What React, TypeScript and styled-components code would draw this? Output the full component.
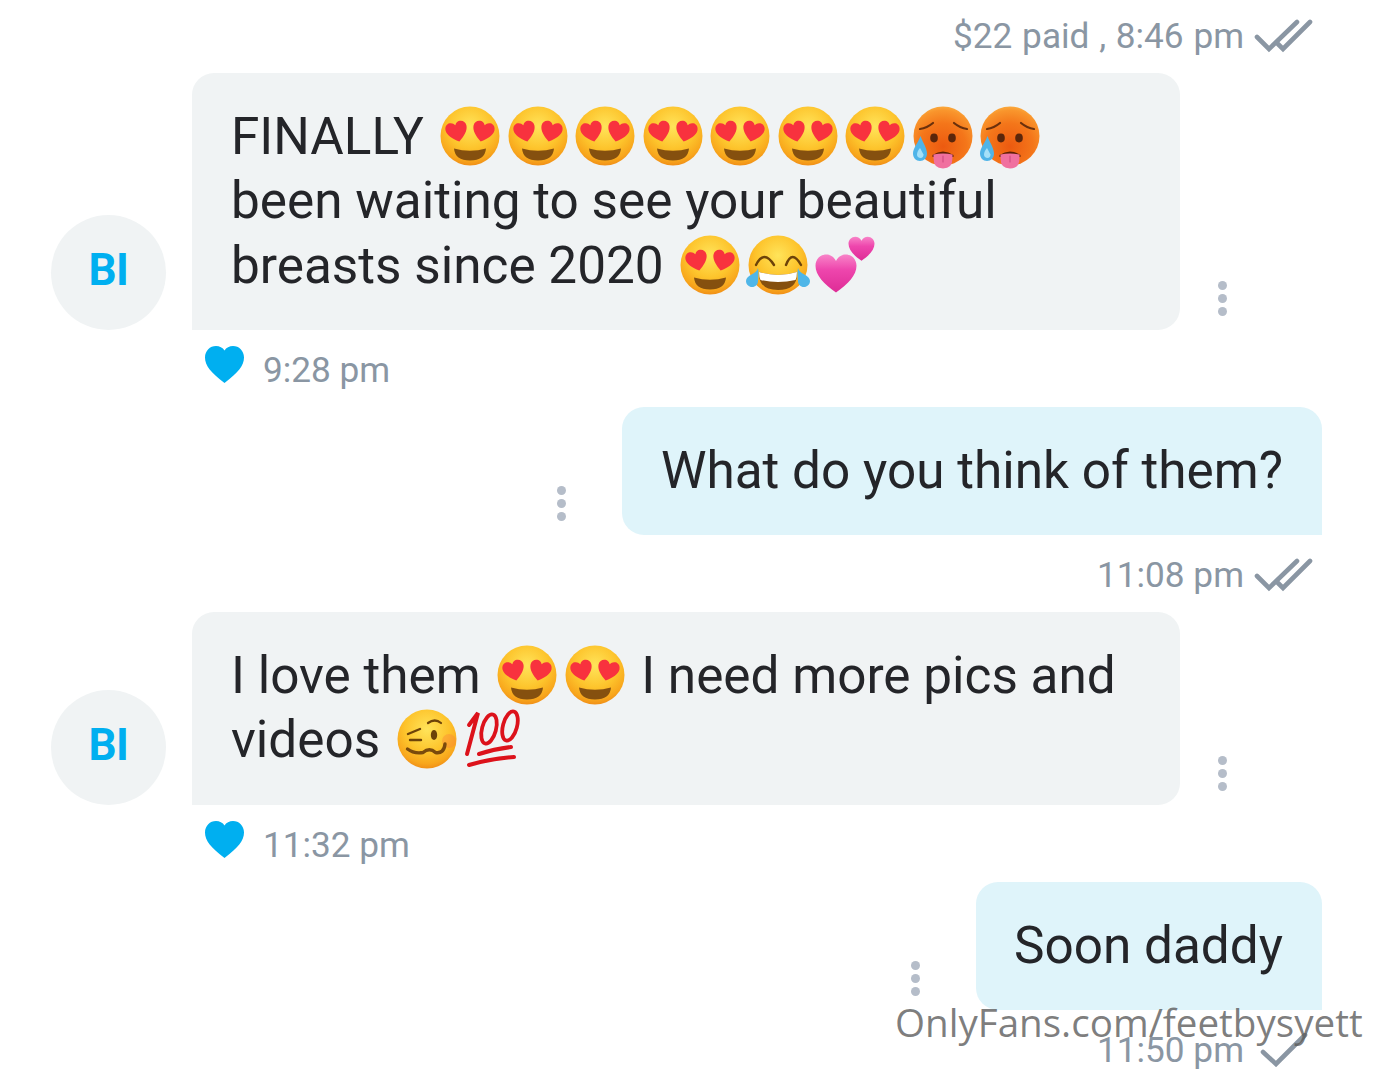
import React from 'react';
import styled, {createGlobalStyle} from 'styled-components';

const GlobalStyle = createGlobalStyle`
  html, body {
    margin: 0;
    padding: 0;
    background: #fff;
  }
`

const Heart = ({x, y, size, rotate, fill}: { x: number, y: number, size: number, rotate: number, fill: string }) => (
    <g transform={`translate(${x} ${y}) rotate(${rotate}) scale(${size / 20}) translate(-10 -10)`}>
        <path
            d="M10 19C4 15 0 10.5 0 6C0 2.7 2.4 .5 5.2 .5C7.2 .5 9 1.6 10 3.6C11 1.6 12.8 .5 14.8 .5C17.6 .5 20 2.7 20 6C20 10.5 16 15 10 19z"
            fill={fill}/>
    </g>
)

const YellowFace = ({id}: { id: string }) => (
    <>
        <defs>
            <radialGradient id={id} cx="50%" cy="34%" r="68%">
                <stop offset="0%" stopColor="#ffe45a"/>
                <stop offset="55%" stopColor="#fdc42c"/>
                <stop offset="85%" stopColor="#f8a61c"/>
                <stop offset="100%" stopColor="#ef8a16"/>
            </radialGradient>
        </defs>
        <circle cx="30" cy="30" r="29.5" fill={`url(#${id})`}/>
    </>
)

const HeartEyes = () => (
    <EmojiSvg viewBox="0 0 60 60" role="img" aria-label="heart eyes">
        <YellowFace id="face-hearts"/>
        <path d="M14 42.500Q30 47 46 42.500Q45 54.500 30 54.500Q15 54.500 14 42.500z" fill="#85500f"/>
        <Heart x={17} y={26} size={21.500} rotate={-14} fill="#f8323e"/>
        <Heart x={43} y={26} size={21.500} rotate={14} fill="#f8323e"/>
    </EmojiSvg>
)

const HotFace = () => (
    <EmojiSvg viewBox="0 0 60 60" role="img" aria-label="hot face">
        <defs>
            <radialGradient id="face-hot" cx="50%" cy="68%" r="72%">
                <stop offset="0%" stopColor="#ec5a10"/>
                <stop offset="55%" stopColor="#f4761a"/>
                <stop offset="85%" stopColor="#f9952c"/>
                <stop offset="100%" stopColor="#fcb446"/>
            </radialGradient>
        </defs>
        <circle cx="30" cy="30" r="29.5" fill="url(#face-hot)"/>
        <path d="M7 23Q14 22 20 17" stroke="#6a300c" strokeWidth="2.200" fill="none" strokeLinecap="round"/>
        <path d="M41 17Q47 22 54 23" stroke="#6a300c" strokeWidth="2.200" fill="none" strokeLinecap="round"/>
        <ellipse cx="21" cy="32" rx="3.800" ry="4.400" fill="#5a260b"/>
        <ellipse cx="39" cy="32" rx="3.800" ry="4.400" fill="#5a260b"/>
        <path d="M19.500 49Q30 42 40.500 49L40.500 51L19.500 51z" fill="#5f2007"/>
        <path d="M20.500 48.500Q30 46.500 39.500 48.500L39.500 52Q39.500 62.500 30 62.500Q20.500 62.500 20.500 52z" fill="#f0709f"/>
        <path d="M30 50L30 56" stroke="#d34d83" strokeWidth="1.200" strokeLinecap="round"/>
        <path d="M7.500 30C5 37 0 42 0 47.500C0 52 3 55 7 55C11 55 14 52 14 47.500C14 42 10 37 7.500 30z" fill="#4fb4e8"/>
        <path d="M7 42C5.500 44 4 46 4 48.500C4 50.500 5.500 52 7.500 52C9.500 52 10.500 50.500 10.500 48.500" fill="#a4e0f8"/>
    </EmojiSvg>
)

const Joy = () => (
    <EmojiSvg viewBox="0 0 60 60" role="img" aria-label="tears of joy">
        <YellowFace id="face-joy"/>
        <path d="M8 30Q16 14 26 30M38 30Q44 14 53 30" stroke="#6d4309" strokeWidth="2.400" fill="none"
              strokeLinecap="round"/>
        <path d="M11 37Q30 43 49 37Q50 55 30 55Q10 55 11 37z" fill="#85500f"/>
        <path d="M11 37Q30 43 49 37Q49 42 47.500 45Q30 49 12.500 45Q11 42 11 37z" fill="#fff"/>
        <path d="M10 33C9 39 -2 40 -2 46C-2 49.500 1 52 4 52C7.500 52 10 49.500 10 46C10 42 11 38 10 33z" fill="#4fb6e8"/>
        <path d="M50 33C51 39 62 40 62 46C62 49.500 59 52 56 52C52.500 52 50 49.500 50 46C50 42 49 38 50 33z"
              fill="#4fb6e8"/>
    </EmojiSvg>
)

const TwoHearts = () => (
    <EmojiSvg viewBox="0 0 60 60" role="img" aria-label="two hearts">
        <defs>
            <linearGradient id="heart-pink" x1="0" y1="0" x2="0" y2="1">
                <stop offset="0%" stopColor="#f884c8"/>
                <stop offset="40%" stopColor="#ee46ad"/>
                <stop offset="100%" stopColor="#de2c96"/>
            </linearGradient>
        </defs>
        <Heart x={21} y={39} size={41} rotate={0} fill="url(#heart-pink)"/>
        <Heart x={46.500} y={14} size={26} rotate={0} fill="url(#heart-pink)"/>
    </EmojiSvg>
)

const Woozy = () => (
    <EmojiSvg viewBox="0 0 60 60" role="img" aria-label="woozy face">
        <YellowFace id="face-woozy"/>
        <circle cx="52" cy="32" r="7" fill="#f97a3c" opacity=".35"/>
        <path d="M11 25L23 20M13 31L24 31" stroke="#6d4309" strokeWidth="2.400" fill="none" strokeLinecap="round"/>
        <path d="M31 14Q38 9 44 14" stroke="#6d4309" strokeWidth="2.200" fill="none" strokeLinecap="round"/>
        <ellipse cx="37" cy="26" rx="3.200" ry="5" fill="#6d4309"/>
        <path d="M10.500 40Q17 45 26 43.500Q32.500 38 38.500 43.500Q47 45 48 35" stroke="#7a4a0c" strokeWidth="3.400"
              fill="none" strokeLinecap="round"/>
    </EmojiSvg>
)

const Hundred = () => (
    <EmojiSvg viewBox="0 0 60 60" role="img" aria-label="hundred points">
        <g stroke="#dc121b" fill="none" strokeLinecap="round">
            <path d="M5 16L14 4L3 45" strokeWidth="4"/>
            <ellipse cx="25" cy="20" rx="7" ry="15" transform="rotate(15 25 20)" strokeWidth="3.800"/>
            <ellipse cx="46" cy="17" rx="7" ry="15" transform="rotate(15 46 17)" strokeWidth="3.800"/>
            <path d="M15 45Q30 40 47 38" strokeWidth="4"/>
            <path d="M5 56Q25 50 50 48" strokeWidth="4"/>
        </g>
    </EmojiSvg>
)

const ReadIcon = () => (
    <CheckSvg viewBox="0 0 60 34">
        <path d="M3 18L15 30L43 3M24 25L29 30L56 3" fill="none" stroke="#8a96a3" strokeWidth="4.600"
              strokeLinecap="round" strokeLinejoin="miter"/>
    </CheckSvg>
)

const SentIcon = () => (
    <CheckSvg viewBox="0 0 60 34">
        <path d="M9 19L22 31L51 2" fill="none" stroke="#8a96a3" strokeWidth="4.600" strokeLinecap="round"
              strokeLinejoin="miter"/>
    </CheckSvg>
)

const Kebab = ({own}: { own?: boolean }) => (
    <KebabBox $own={own}>
        <i/><i/><i/>
    </KebabBox>
)

const Incoming = ({children, time}: { children: React.ReactNode, time: string }) => (
    <>
        <Row>
            <Avatar>BI</Avatar>
            <Bubble>{children}</Bubble>
            <Kebab/>
        </Row>
        <LikedMeta>
            <HeartSvg viewBox="0 0 39 37">
                <path
                    d="M19.500 37C6 26.500 0 20 0 11.500C0 4.800 5 0 11 0C14.500 0 17.800 1.700 19.500 4.500C21.200 1.700 24.500 0 28 0C34 0 39 4.800 39 11.500C39 20 33 26.500 19.500 37z"
                    fill="#00aff0"/>
            </HeartSvg>
            <Time>{time}</Time>
        </LikedMeta>
    </>
)

const Outgoing = ({children}: { children: React.ReactNode }) => (
    <OwnRow>
        <Kebab own/>
        <OwnBubble>{children}</OwnBubble>
    </OwnRow>
)

const App = () => {
    return (
        <Page>
            <GlobalStyle/>
            <OwnMeta $first>
                <Time $wide>$22 paid , 8:46 pm</Time>
                <ReadIcon/>
            </OwnMeta>
            <Incoming time="9:28 pm">
                FINALLY <HeartEyes/><HeartEyes/><HeartEyes/><HeartEyes/><HeartEyes/><HeartEyes/><HeartEyes/><HotFace/><HotFace/>
                <br/>
                been waiting to see your beautiful
                <br/>
                breasts since 2020 <HeartEyes/><Joy/><TwoHearts/>
            </Incoming>
            <Outgoing>What do you think of them?</Outgoing>
            <OwnMeta>
                <Time>11:08 pm</Time>
                <ReadIcon/>
            </OwnMeta>
            <Incoming time="11:32 pm">
                I love them <HeartEyes/><HeartEyes/> I need more pics and videos <Woozy/><Hundred/>
            </Incoming>
            <Outgoing>Soon daddy</Outgoing>
            <OwnMeta>
                <Time>11:50 pm</Time>
                <SentIcon/>
            </OwnMeta>
            <Watermark>OnlyFans.com/feetbysyett</Watermark>
        </Page>
    );
};

export default App;


const Page = styled.div`
  position: relative;
  width: 1373px;
  height: 1080px;
  overflow: hidden;
  box-sizing: border-box;
  padding: 0 51px;
  background: #fff;
  font-family: Roboto, 'Liberation Sans', sans-serif;
  color: #242529;
`

const Row = styled.div`
  display: flex;
  align-items: flex-end;
`

const OwnRow = styled(Row)`
  justify-content: flex-end;
`

const Avatar = styled.div`
  flex: none;
  display: flex;
  align-items: center;
  justify-content: center;
  box-sizing: border-box;
  width: 115px;
  height: 115px;
  margin-right: 26px;
  padding-bottom: 4px;
  border-radius: 50%;
  background: #f0f3f4;
  color: #00aff0;
  font-size: 44px;
  font-weight: 700;
  letter-spacing: -0.5px;
`

const Bubble = styled.div`
  box-sizing: border-box;
  width: 988px;
  padding: 32px 40px 32px 39px;
  border-radius: 22px 22px 22px 0;
  background: #f0f3f4;
  font-size: 51.300px;
  line-height: 64.300px;
`

const OwnBubble = styled(Bubble)`
  width: auto;
  padding-right: 39px;
  padding-left: 38.500px;
  border-radius: 22px 22px 0 22px;
  background: #dff4fa;
`

const EmojiSvg = styled.svg`
  display: inline-block;
  width: 60px;
  height: 60px;
  margin: -10px 3.750px;
  vertical-align: -2px;
  overflow: visible;
`

const KebabBox = styled.div<{ $own?: boolean }>`
  display: flex;
  flex-direction: column;
  gap: 4px;
  margin: ${({$own}) => ($own ? '0 56px 14px 0' : '0 0 14px 38px')};
  i {
    display: block;
    width: 9px;
    height: 9px;
    border-radius: 50%;
    background: #b5bdc9;
  }
`

const Meta = styled.div`
  display: flex;
  align-items: center;
  height: 40px;
  margin: 20px 0 17px;
`

const OwnMeta = styled(Meta)<{ $first?: boolean }>`
  justify-content: flex-end;
  padding-right: 8px;
  margin-top: ${({$first}) => ($first ? '16px' : '20px')};
`

const LikedMeta = styled(Meta)`
  padding-left: 154px;
`

const Time = styled.span<{ $wide?: boolean }>`
  color: #8a96a3;
  font-size: 35.200px;
  line-height: 40px;
  word-spacing: ${({$wide}) => ($wide ? '1px' : '0')};
`

const CheckSvg = styled.svg`
  flex: none;
  width: 60px;
  height: 34px;
  margin-left: 10px;
`

const HeartSvg = styled.svg`
  flex: none;
  width: 39px;
  height: 37px;
  margin: -10px 19px 0 0;
`

const Watermark = styled.div`
  position: absolute;
  left: 895px;
  top: 999px;
  font-family: 'Open Sans', sans-serif;
  font-size: 38.600px;
  line-height: 46px;
  white-space: nowrap;
  color: rgba(90, 90, 90, 0.78);
`
